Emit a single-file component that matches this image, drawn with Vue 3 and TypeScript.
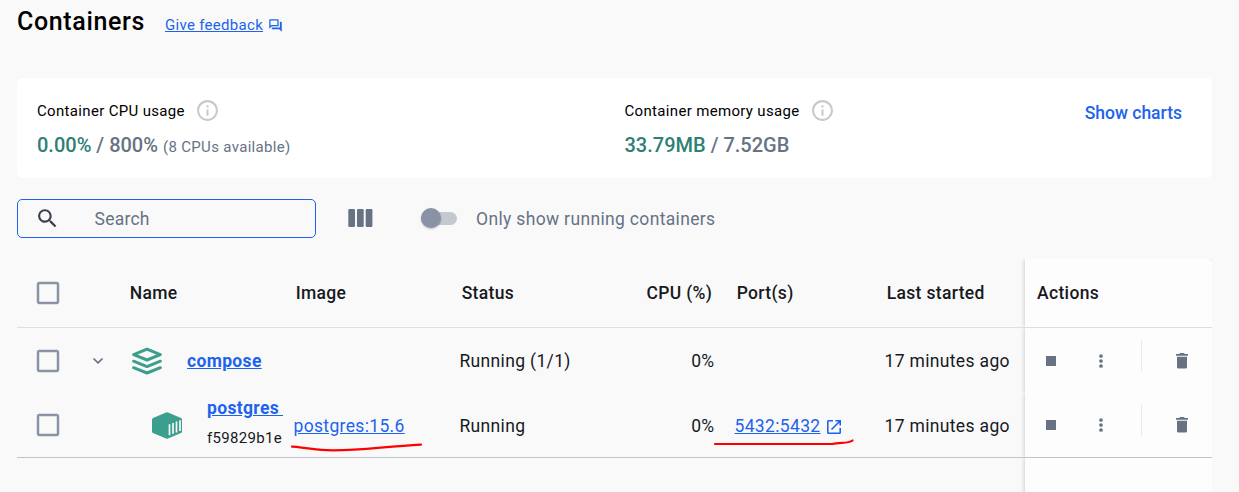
<script setup lang="ts">
interface Row {
  kind: 'stack' | 'container'
  name: string
  id?: string
  image?: string
  status: string
  cpu: string
  port?: string
  started: string
}

const rows: Row[] = [
  { kind: 'stack', name: 'compose', status: 'Running (1/1)', cpu: '0%', started: '17 minutes ago' },
  {
    kind: 'container',
    name: 'postgres ',
    id: 'f59829b1e',
    image: 'postgres:15.6',
    status: 'Running',
    cpu: '0%',
    port: '5432:5432',
    started: '17 minutes ago',
  },
]

const boxPath =
  'M19 5v14H5V5h14m0-2H5c-1.100 0-2 .9-2 2v14c0 1.100.9 2 2 2h14c1.100 0 2-.9 2-2V5c0-1.100-.9-2-2-2z'
const infoPath =
  'M11 7h2v2h-2zm0 4h2v6h-2zm1-9C6.480 2 2 6.480 2 12s4.480 10 10 10 10-4.480 10-10S17.520 2 12 2zm0 18c-4.410 0-8-3.590-8-8s3.590-8 8-8 8 3.590 8 8-3.590 8-8 8z'
</script>

<template>
  <main class="page">
    <header class="top">
      <h1>Containers</h1>
      <a class="feedback"><span>Give feedback</span>
        <svg viewBox="0 0 24 24" width="15" height="15"><path fill="currentColor" d="M15 4v7H5.17L4 12.17V4h11m1-2H3c-.55 0-1 .45-1 1v14l4-4h10c.55 0 1-.45 1-1V3c0-.55-.45-1-1-1zm5 4h-2v9H6v2c0 .55.45 1 1 1h11l4 4V7c0-.55-.45-1-1-1z" /></svg>
      </a>
    </header>

    <section class="usage">
      <div class="metric cpu-metric">
        <div class="label"><span class="label-text">Container CPU usage</span>
          <svg class="info" viewBox="0 0 24 24"><path fill="currentColor" :d="infoPath" /></svg>
        </div>
        <div class="value"><b>0.00%</b> / 800% <small>(8 CPUs available)</small></div>
      </div>
      <div class="metric">
        <div class="label"><span class="label-text">Container memory usage</span>
          <svg class="info" viewBox="0 0 24 24"><path fill="currentColor" :d="infoPath" /></svg>
        </div>
        <div class="value"><b>33.79MB</b> / 7.52GB</div>
      </div>
      <a class="charts">Show charts</a>
    </section>

    <section class="tools">
      <div class="search">
        <svg viewBox="0 0 24 24" width="25" height="25"><path fill="currentColor" d="M15.500 14h-.79l-.28-.27C15.410 12.590 16 11.110 16 9.500 16 5.910 13.090 3 9.500 3S3 5.910 3 9.500 5.910 16 9.500 16c1.610 0 3.090-.59 4.230-1.570l.27.28v.79l5 4.990L20.490 19l-4.990-5zm-6 0C7.010 14 5 11.990 5 9.500S7.010 5 9.500 5 14 7.010 14 9.500 11.990 14 9.500 14z" /></svg>
        <span>Search</span>
      </div>
      <svg class="columns" viewBox="0 0 25 18" width="25" height="18"><g fill="#677285"><rect x="0.300" width="6.700" height="18" rx="1.200" /><rect x="9" width="6.700" height="18" rx="1.200" /><rect x="17.700" width="6.700" height="18" rx="1.200" /></g></svg>
      <div class="switch"><i></i></div>
      <span class="only">Only show running containers</span>
    </section>

    <section class="table">
      <div class="tr head">
        <div class="td check"><svg class="box" viewBox="0 0 24 24"><path :d="boxPath" /></svg></div>
        <div class="td">Name</div>
        <div class="td">Image</div>
        <div class="td">Status</div>
        <div class="td right">CPU (%)</div>
        <div class="td">Port(s)</div>
        <div class="td">Last started</div>
        <div class="td actions">Actions</div>
      </div>
      <div v-for="row in rows" :key="row.name" class="tr" :class="row.kind">
        <div class="td check">
          <svg class="box" viewBox="0 0 24 24"><path :d="boxPath" /></svg>
          <svg v-if="row.kind === 'stack'" class="chevron" viewBox="0 0 12 8" width="12" height="8"><path d="M1.500 1.500 6 5.800l4.500-4.300" fill="none" stroke="#677285" stroke-width="1.700" /></svg>
        </div>
        <div class="td name">
          <svg v-if="row.kind === 'stack'" class="kind-icon" viewBox="0 0 30 28" width="30" height="28">
            <g fill="none" stroke="#3c9f8d" stroke-width="3" stroke-linejoin="round" stroke-linecap="round"><path d="M15 2.200 28.300 7.700 15 13 1.700 7.700z" /><path d="M1.600 14.200 15 19.600l13.400-5.400M1.600 20.700 15 26l13.400-5.300" /></g>
          </svg>
          <svg v-else class="kind-icon" viewBox="0 0 30 27" width="30" height="27">
            <path d="M14 .5q1-.5 2 0L29 6q1 .5 1 1.600v12q0 1-1 1.500L16 26.400q-1 .5-2 0L1 21q-1-.4-1-1.500v-12Q0 6.500 1 6z" fill="#3c9f8d" />
            <path d="M17.500 12.200v11M21 11v10.800M24.500 9.600v10.800M28 8.300v10.600" fill="none" stroke="#f9f9fa" stroke-width="1.700" />
          </svg>
          <div class="name-text">
            <a>{{ row.name }}</a>
            <span v-if="row.id">{{ row.id }}</span>
          </div>
        </div>
        <div class="td text"><a v-if="row.image" class="link">{{ row.image }}</a></div>
        <div class="td text">{{ row.status }}</div>
        <div class="td text right">{{ row.cpu }}</div>
        <div class="td text">
          <template v-if="row.port">
            <a class="link">{{ row.port }}</a>
            <svg class="external" viewBox="0 0 14 14" width="14" height="14"><path d="M6 .8H1.500q-.7 0-.7.7v11q0 .7.700.7h11q.7 0 .7-.7V8M8.500.8h4.700v4.700M13 1 4.500 9.500" fill="none" stroke="#1d63ed" stroke-width="1.600" /></svg>
          </template>
        </div>
        <div class="td text">{{ row.started }}</div>
        <div class="td actions">
          <i class="stop"></i>
          <svg class="more" viewBox="0 0 4 14" width="4" height="14"><g fill="#677285"><circle cx="2" cy="2" r="1.850" /><circle cx="2" cy="7" r="1.850" /><circle cx="2" cy="12" r="1.850" /></g></svg>
          <i class="rule"></i>
          <svg class="trash" viewBox="0 0 12 16" width="12" height="16"><path fill="#677285" d="M0 .9h3.200L4 0h4l.8.9H12v1.800H0zM1 3.800h10v10.400q0 1.400-1.400 1.400H2.400Q1 15.600 1 14.200z" /></svg>
        </div>
      </div>
      <div class="tr rest">
        <div class="td actions"></div>
      </div>

      <svg class="mark image-mark" viewBox="0 0 134 12" width="134" height="12"><path d="M2 3.600C10 3.800 20 6.500 37 7.200c30 1 55-3.600 94-5.600" /></svg>
      <svg class="mark port-mark" viewBox="0 0 144 10" width="144" height="10"><path d="M2 7h117c8-2 16 0 20.500-3.500" /></svg>
    </section>
  </main>
</template>

<style>
html,
body {
  margin: 0;
  background: #f9f9f9;
  overflow: hidden;
}
</style>

<style scoped>
.page {
  box-sizing: border-box;
  width: 1239px;
  height: 492px;
  padding: 0 27px 0 17px;
  overflow: hidden;
  background: #f9f9f9;
  color: #17191e;
  font-family: Roboto, 'Liberation Sans', sans-serif;
  font-size: 17.5px;
  line-height: 25px;
}
.top {
  display: flex;
  align-items: center;
  height: 43px;
  margin-bottom: 35px;
}
h1 {
  margin: 0;
  width: 148px;
  font-size: 25px;
  font-weight: 500;
  letter-spacing: 0.65px;
  color: #000;
}
.feedback {
  display: flex;
  align-items: center;
  gap: 5px;
  margin-top: 7px;
  font-size: 15px;
  letter-spacing: 0.3px;
  color: #1d63ed;
}
.feedback span {
  text-decoration: underline;
}
.usage {
  display: flex;
  box-sizing: border-box;
  height: 100px;
  padding: 20px 30px 0 20px;
  background: #fff;
  border-radius: 5px;
}
.cpu-metric {
  width: 587.5px;
}
.label {
  display: flex;
  align-items: center;
  gap: 10px;
  height: 25px;
  font-size: 15px;
  letter-spacing: 0.33px;
  color: #000;
}
.label-text {
  padding-top: 2px;
}
.info {
  width: 25px;
  height: 25px;
  color: #c9c9c9;
}
.value {
  margin-top: 10px;
  font-size: 20px;
  font-weight: 500;
  color: #677285;
}
.value b {
  font-weight: 500;
  color: #2e7f74;
}
.value small {
  font-size: 15px;
  font-weight: 400;
  letter-spacing: 0.33px;
}
.charts {
  margin: 3px 0 0 auto;
  font-weight: 500;
  color: #1d63ed;
}
.tools {
  display: flex;
  align-items: center;
  height: 39px;
  margin: 21px 0;
  color: #677285;
}
.search {
  display: flex;
  align-items: center;
  gap: 34.5px;
  box-sizing: border-box;
  width: 299px;
  height: 39px;
  padding-left: 17px;
  border: 1px solid #1d63ed;
  border-radius: 5px;
}
.search svg {
  color: #393f49;
}
.search span {
  padding-top: 2px;
  letter-spacing: 0.25px;
}
.columns {
  margin: -2px 0 0 32px;
}
.switch {
  display: flex;
  align-items: center;
  width: 36px;
  height: 13px;
  margin: -1px 0 0 48px;
  border-radius: 7px;
  background: #c4c8d1;
}
.switch i {
  width: 20px;
  height: 20px;
  border-radius: 50%;
  background: #8993a5;
  box-shadow: 0 1px 2px rgba(0, 0, 0, 0.25);
}
.only {
  margin-left: 19px;
  padding-top: 2px;
  letter-spacing: 0.34px;
}
.table {
  position: relative;
  letter-spacing: 0.34px;
}
.tr {
  display: grid;
  grid-template-columns: 100px 166px 166px 166px 109px 150px 151px 187px;
  box-sizing: border-box;
  height: 65px;
}
.td {
  display: flex;
  align-items: center;
  min-width: 0;
  padding: 0 9.5px 0 10.5px;
  white-space: nowrap;
}
.text {
  padding-top: 2px;
}
.right {
  justify-content: flex-end;
}
.head {
  height: 69px;
  border-bottom: 1px solid #dcdee1;
  font-weight: 500;
}
.head .td {
  padding: 0 11.700px 0 12.700px;
}
.head .actions {
  padding-left: 12px;
}
.head .check,
.tr .check {
  padding: 0 0 0 16px;
}
.box {
  flex: none;
  width: 30px;
  height: 30px;
  fill: #8993a5;
}
.chevron {
  margin-left: 29px;
}
.tr .name {
  padding: 0 0 0 15px;
  gap: 25px;
}
.container .name {
  padding-left: 35px;
}
.name-text {
  display: flex;
  flex-direction: column;
  min-width: 0;
  overflow: hidden;
}
.stack .name-text {
  padding-top: 2px;
}
.container .name-text {
  margin-top: -4px;
}
.kind-icon {
  flex: none;
}
.name-text a {
  font-weight: 700;
  color: #1d63ed;
  text-decoration: underline;
  white-space: pre;
}
.container .name-text a {
  line-height: 30px;
}
.name-text span {
  font-size: 15px;
  line-height: 30px;
  letter-spacing: 0.33px;
}
.link {
  color: #1d63ed;
  text-decoration: underline;
}
.container {
  border-bottom: 1px solid #c0c4ce;
}
.external {
  margin: 2px 0 0 6.500px;
}
.tr .actions {
  background: #fdfdfd;
  box-shadow: -1px 0 4px rgba(0, 0, 0, 0.16);
  clip-path: inset(0 0 0 -6px);
}
.head .actions {
  border-top-right-radius: 5px;
}
.stop {
  width: 10px;
  height: 10px;
  margin-left: 10px;
  background: #677285;
}
.more {
  margin-left: 43px;
}
.rule {
  width: 1px;
  height: 31px;
  margin: -10px 0 0 38px;
  background: #e8e9ec;
}
.trash {
  margin-left: 34px;
}
.rest {
  height: 40px;
}
.rest .actions {
  grid-column: 8;
}
.mark {
  position: absolute;
  fill: none;
  stroke: #f00;
  stroke-width: 2.200;
  stroke-linecap: round;
}
.image-mark {
  left: 273px;
  top: 184px;
}
.port-mark {
  left: 696px;
  top: 178px;
}
</style>
